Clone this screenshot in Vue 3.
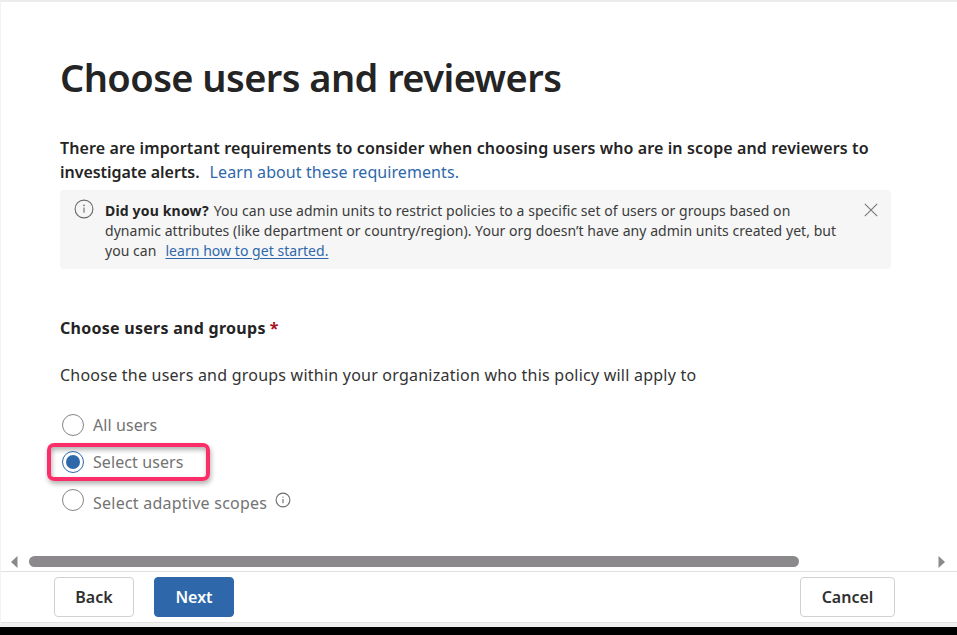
<script setup>
import { ref } from 'vue'

const selected = ref('select')
const options = [
  { id: 'all', label: 'All users' },
  { id: 'select', label: 'Select users' },
  { id: 'adaptive', label: 'Select adaptive scopes', info: true },
]
</script>

<template>
  <div class="page">
    <main class="content">
      <h1>Choose users and reviewers</h1>
      <p class="intro">
        <span class="t-intro1">There are important requirements to consider when choosing users who are in scope and reviewers to</span><br>
        <span class="t-intro2">investigate alerts.</span><a class="learn">Learn about these requirements.</a>
      </p>

      <section class="notice">
        <svg class="notice-icon" width="20" height="20" viewBox="0 0 20 20">
          <circle cx="10" cy="10" r="8.9" fill="none" stroke="#6a6a6a" stroke-width="1.1" />
          <path d="M10 8.6v5.2" stroke="#6a6a6a" stroke-width="1.1" />
          <circle cx="10" cy="6.4" r="0.8" fill="#6a6a6a" />
        </svg>
        <p class="notice-text">
          <b>Did you know?</b>You can use admin units to restrict policies to a specific set of users or groups based on<br>
          dynamic attributes (like department or country/region). Your org doesn’t have any admin units created yet, but<br>
          you can<a class="started">learn how to get started.</a>
        </p>
        <svg class="close" width="14" height="14" viewBox="0 0 14 14">
          <path d="M0.8 0.8L13.2 13.2M13.2 0.8L0.8 13.2" stroke="#777" stroke-width="1.1" />
        </svg>
      </section>

      <h2>Choose users and groups<span class="required">*</span></h2>
      <p class="hint">Choose the users and groups within your organization who this policy will apply to</p>

      <div class="options">
        <label v-for="o in options" :key="o.id" class="option" :class="o.id" @click="selected = o.id">
          <span class="radio" :class="{ on: selected === o.id }"></span>
          <span class="option-label">{{ o.label }}</span>
          <svg v-if="o.info" class="info" width="16" height="16" viewBox="0 0 16 16">
            <circle cx="8" cy="8" r="6.9" fill="none" stroke="#6a6a6a" stroke-width="1.1" />
            <path d="M8 7v4.2" stroke="#6a6a6a" stroke-width="1.1" />
            <circle cx="8" cy="5.1" r="0.7" fill="#6a6a6a" />
          </svg>
        </label>
      </div>
    </main>

    <div class="scrollbar">
      <svg width="7" height="12" viewBox="0 0 7 12"><path d="M6.5 0v12L0 6z" fill="#8b898b" /></svg>
      <div class="track"><div class="thumb"></div></div>
      <svg width="7" height="12" viewBox="0 0 7 12"><path d="M0.5 0v12L7 6z" fill="#8b898b" /></svg>
    </div>

    <footer class="footer">
      <button class="btn back">Back</button>
      <button class="btn next">Next</button>
      <button class="btn cancel">Cancel</button>
    </footer>
    <div class="edge"></div>
  </div>
</template>

<style>
body { background: #000; overflow: hidden; }
</style>

<style scoped>
.page {
  box-sizing: border-box;
  width: 957px;
  height: 627px;
  display: flex;
  flex-direction: column;
  background: #fff;
  border-top: 2px solid #ececec;
  border-left: 1px solid #f3f3f3;
  font-family: "Noto Sans", "Open Sans", sans-serif;
  color: #242424;
  white-space: nowrap;
}
h1, h2, p { margin: 0; }
.content {
  box-sizing: border-box;
  height: 554px;
  padding: 49px 0 0 59px;
}
h1 { height: 85px; font-size: 38px; line-height: 52px; font-weight: 600; letter-spacing: -0.56px; }
.intro { font-size: 16px; line-height: 24px; font-weight: 600; }
.t-intro1 { letter-spacing: 0.12px; }
.t-intro2 { letter-spacing: -0.03px; }
.learn { margin-left: 10px; font-weight: 400; letter-spacing: 0.08px; color: #2e68ab; }
.notice {
  box-sizing: border-box;
  width: 831px;
  height: 79px;
  margin-top: 6px;
  padding: 11px 13px 0 14px;
  display: flex;
  align-items: flex-start;
  background: #f6f6f6;
  border-radius: 4px;
}
.notice-icon { margin-top: -2px; }
.notice-text {
  flex: 1;
  margin-left: 11px;
  font-size: 14px;
  line-height: 20px;
  letter-spacing: 0.043px;
  color: #3b3b3b;
}
.notice-text b { color: #242424; margin-right: 5px; letter-spacing: 0.17px; }
.started { margin-left: 9px; color: #2e68ab; text-decoration: underline; text-underline-offset: 2px; }
.close { margin-top: 2px; }
h2 { margin-top: 47px; font-size: 16px; line-height: 24px; font-weight: 700; letter-spacing: 0.27px; }
.required { margin-left: 4px; color: #a80f1c; }
.hint { margin-top: 23px; font-size: 16px; line-height: 24px; letter-spacing: 0.226px; color: #333; }
.options {
  margin: 18px 0 0 -13px;
  width: 260px;
}
.option {
  box-sizing: border-box;
  display: flex;
  align-items: center;
  height: 38px;
  padding-left: 15px;
  font-size: 16px;
  line-height: 24px;
  letter-spacing: 0.09px;
  color: #737373;
}
.option.all { padding-top: 1px; }
.option.select {
  width: 163px;
  padding-left: 11px;
  border: 4px solid #fb2e6a;
  border-radius: 7px;
  box-shadow: 1px 3px 5px rgba(0, 0, 0, 0.3), inset 1px 3px 5px rgba(0, 0, 0, 0.3);
}
.radio {
  box-sizing: border-box;
  width: 22px;
  height: 22px;
  border: 1px solid #858585;
  border-radius: 50%;
  display: grid;
  place-items: center;
}
.radio.on { border-color: #2e68ab; }
.radio.on::after { content: ""; width: 14px; height: 14px; border-radius: 50%; background: #2e68ab; }
.option-label { margin-left: 9px; }
.adaptive .option-label { padding-top: 6px; letter-spacing: 0.24px; }
.info { margin-left: 8px; }
.scrollbar {
  height: 15px;
  display: flex;
  align-items: flex-start;
  padding: 0 12px 0 10px;
}
.track { flex: 1; padding: 0 11px; }
.thumb { width: 770px; height: 11px; border-radius: 6px; background: #8b898b; }
.footer {
  box-sizing: border-box;
  height: 52px;
  display: flex;
  padding: 5px 62px 0 53px;
  border-top: 1px solid #e1e1e1;
  border-bottom: 1px solid #e1e1e1;
}
.btn {
  box-sizing: border-box;
  height: 40px;
  padding: 0;
  border: 1px solid #d1d1d1;
  border-radius: 4px;
  background: #fff;
  font: 600 16px/24px "Noto Sans", "Open Sans", sans-serif;
  color: #303030;
}
.back { width: 80px; }
.next { width: 80px; margin-left: 20px; background: #2e68ab; border-color: #2e68ab; color: #fff; }
.cancel { width: 95px; margin-left: auto; }
.edge { flex: 1; background: #f0f0f0; }
</style>
